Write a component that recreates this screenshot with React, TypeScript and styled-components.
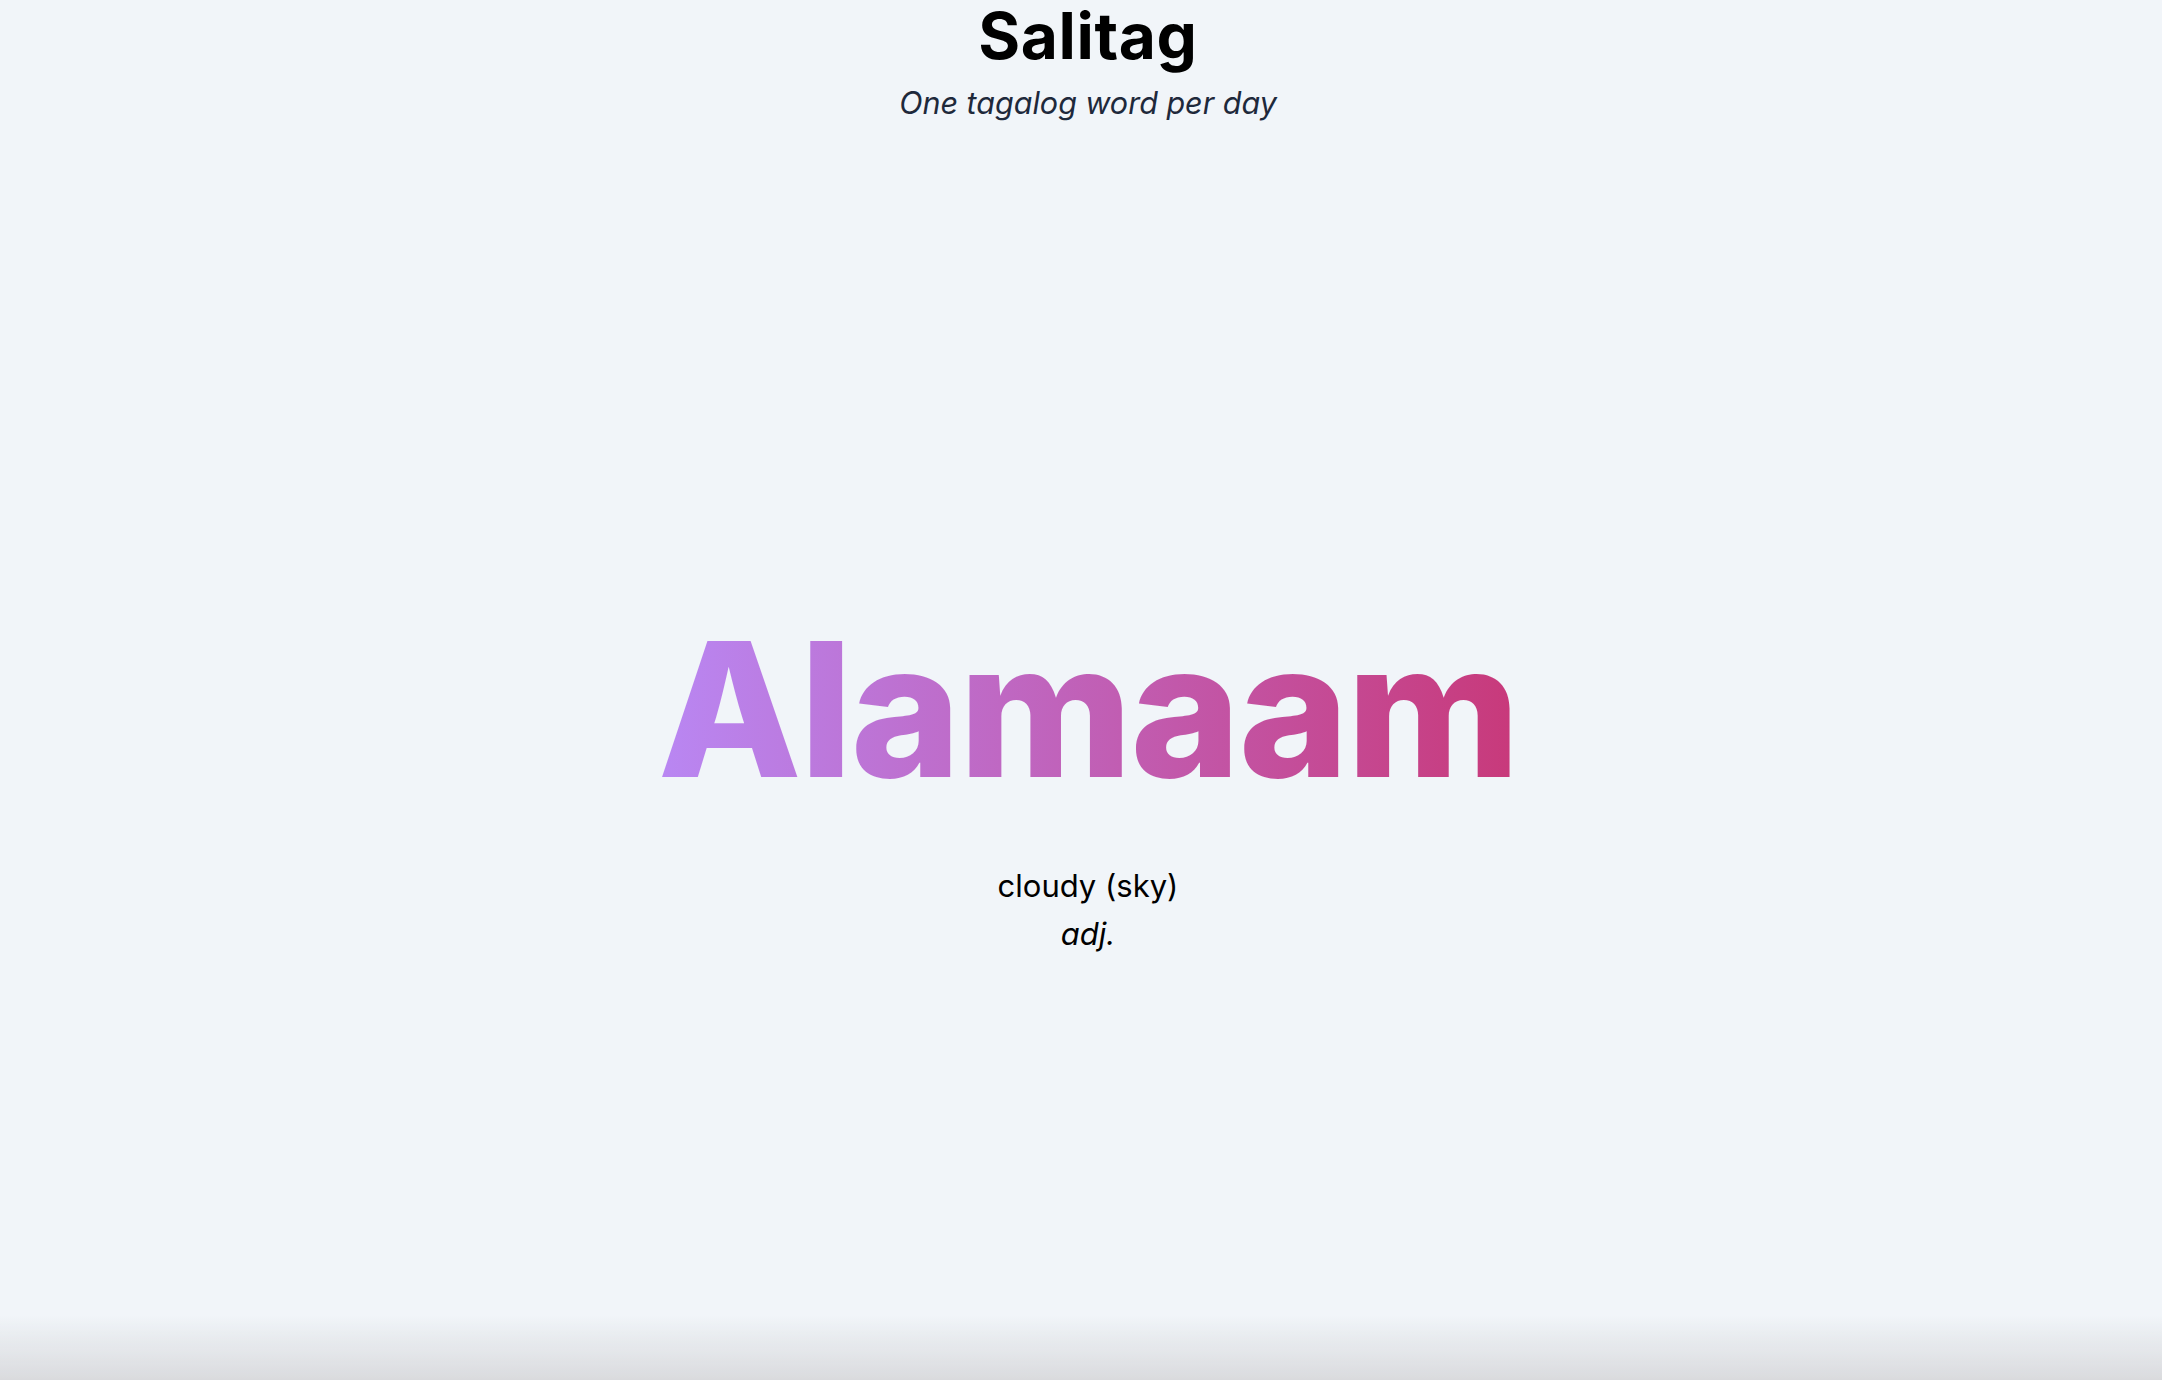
import React from "react";
import styled, { createGlobalStyle } from "styled-components";

const GlobalStyle = createGlobalStyle`
  html, body {
    margin: 0;
    padding: 0;
    background: #f1f5f9;
    font-family: Inter, "Noto Sans", "Liberation Sans", sans-serif;
    color: #000;
  }
  *, *::before, *::after {
    box-sizing: border-box;
  }
`;

const Page = styled.div`
  min-height: 100vh;
  display: flex;
  flex-direction: column;
  padding-left: 14px;
`;

const Header = styled.header`
  display: flex;
  flex-direction: column;
  align-items: center;
  padding-top: 4px;
`;

const Title = styled.h1`
  margin: 0;
  font-size: 64px;
  line-height: 64px;
  font-weight: 700;
  letter-spacing: 0.6px;
  color: #000;
`;

const Tagline = styled.p`
  margin: 17px 0 0;
  font-size: 30.5px;
  line-height: 36px;
  font-style: italic;
  color: #1e293b;
`;

const Main = styled.main`
  flex: 1;
  display: flex;
  flex-direction: column;
  align-items: center;
  padding-top: 495px;
`;

const Word = styled.h2`
  margin: 0;
  font-size: 187px;
  line-height: 187px;
  font-weight: 800;
  letter-spacing: -0.01em;
  background: linear-gradient(to right, #b987f3, #c8397a);
  -webkit-background-clip: text;
  background-clip: text;
  color: transparent;
  -webkit-text-fill-color: transparent;
`;

const Definition = styled.div`
  margin-top: 59px;
  display: flex;
  flex-direction: column;
  align-items: center;
  font-size: 31px;
  line-height: 48px;
  color: #000;
`;

const Meaning = styled.span``;

const PartOfSpeech = styled.span`
  font-style: italic;
`;

const BottomFade = styled.div`
  position: fixed;
  left: 0;
  right: 0;
  bottom: 0;
  height: 64px;
  background: linear-gradient(to bottom, rgba(241, 245, 249, 0), #d9dadd);
  pointer-events: none;
`;

export default function App() {
  return (
    <>
      <GlobalStyle />
      <Page>
        <Header>
          <Title>Salitag</Title>
          <Tagline>One tagalog word per day</Tagline>
        </Header>
        <Main>
          <Word>Alamaam</Word>
          <Definition>
            <Meaning>cloudy (sky)</Meaning>
            <PartOfSpeech>adj.</PartOfSpeech>
          </Definition>
        </Main>
        <BottomFade />
      </Page>
    </>
  );
}
